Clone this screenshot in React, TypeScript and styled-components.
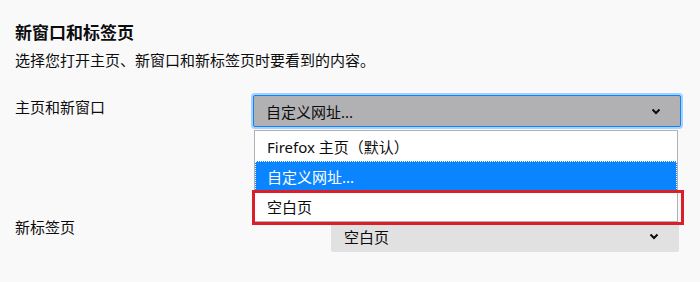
import React from "react"
import styled, { createGlobalStyle } from "styled-components"

const GlobalStyle = createGlobalStyle`
  html, body {
    margin: 0;
    padding: 0;
    background: #f9f9fa;
  }
  body {
    font-family: "Noto Sans", "Noto Sans CJK SC", sans-serif;
    color: #0c0c0d;
  }
`

const Page = styled.div`
  width: 666px;
  padding: 21px 0 0 15px;
`

const Heading = styled.h1`
  margin: 0;
  font-size: 17px;
  font-weight: 700;
  line-height: 24px;
`

const Description = styled.p`
  margin: 4px 0 0;
  font-size: 15px;
  line-height: 22px;
`

const Row = styled.div<{ $top: number }>`
  display: flex;
  justify-content: space-between;
  align-items: flex-start;
  margin-top: ${(p) => p.$top}px;
`

const Label = styled.span<{ $offset: number }>`
  font-size: 15px;
  line-height: 22px;
  margin-top: ${(p) => p.$offset}px;
`

const SelectWrap = styled.div`
  position: relative;
`

const Select = styled.div<{ $width: number; $open?: boolean }>`
  box-sizing: border-box;
  width: ${(p) => p.$width}px;
  height: 32px;
  display: flex;
  align-items: center;
  justify-content: space-between;
  padding: 0 19px 0 12px;
  margin-right: ${(p) => (p.$open ? 0 : 2)}px;
  border: 1px solid ${(p) => (p.$open ? "#0a84ff" : "transparent")};
  border-radius: 2px;
  background: ${(p) => (p.$open ? "#b1b1b3" : "#e1e1e2")};
  box-shadow: ${(p) => (p.$open ? "0 0 0 2px #a8d0f8" : "none")};
  font-size: 15px;
`

const Chevron = () => (
  <svg width="10" height="7" viewBox="0 0 10 7">
    <path d="M1.5 1.5 L5 5 L8.5 1.5" fill="none" stroke="#0c0c0d" strokeWidth="2" />
  </svg>
)

const Popup = styled.div`
  position: absolute;
  top: 35px;
  left: 1px;
  width: 424px;
  box-sizing: border-box;
  border: 1px solid #b1b1b3;
  background: #fff;
  z-index: 2;
`

const Option = styled.div<{ $selected?: boolean }>`
  box-sizing: border-box;
  height: 30px;
  display: flex;
  align-items: center;
  padding-left: 12px;
  font-size: 15px;
  background: ${(p) => (p.$selected ? "#0a84ff" : "#fff")};
  color: ${(p) => (p.$selected ? "#fff" : "#0c0c0d")};
  outline: ${(p) => (p.$selected ? "1px dotted #ffffff" : "none")};
  outline-offset: -1px;
`

const Highlight = styled.div`
  position: absolute;
  top: 59px;
  left: -3px;
  right: -7px;
  height: 35px;
  box-sizing: border-box;
  border: 3px solid #db1f2a;
  pointer-events: none;
`

export default function App() {
  return (
    <>
      <GlobalStyle />
      <Page>
        <Heading>新窗口和标签页</Heading>
        <Description>选择您打开主页、新窗口和新标签页时要看到的内容。</Description>

        <Row $top={24}>
          <Label $offset={1}>主页和新窗口</Label>
          <SelectWrap>
            <Select $width={428} $open>
              <span>自定义网址...</span>
              <Chevron />
            </Select>
            <Popup>
              <Option>Firefox 主页（默认）</Option>
              <Option $selected>自定义网址...</Option>
              <Option>空白页</Option>
              <Highlight />
            </Popup>
          </SelectWrap>
        </Row>

        <Row $top={93}>
          <Label $offset={-4}>新标签页</Label>
          <Select $width={348}>
            <span>空白页</span>
            <Chevron />
          </Select>
        </Row>
      </Page>
    </>
  )
}
